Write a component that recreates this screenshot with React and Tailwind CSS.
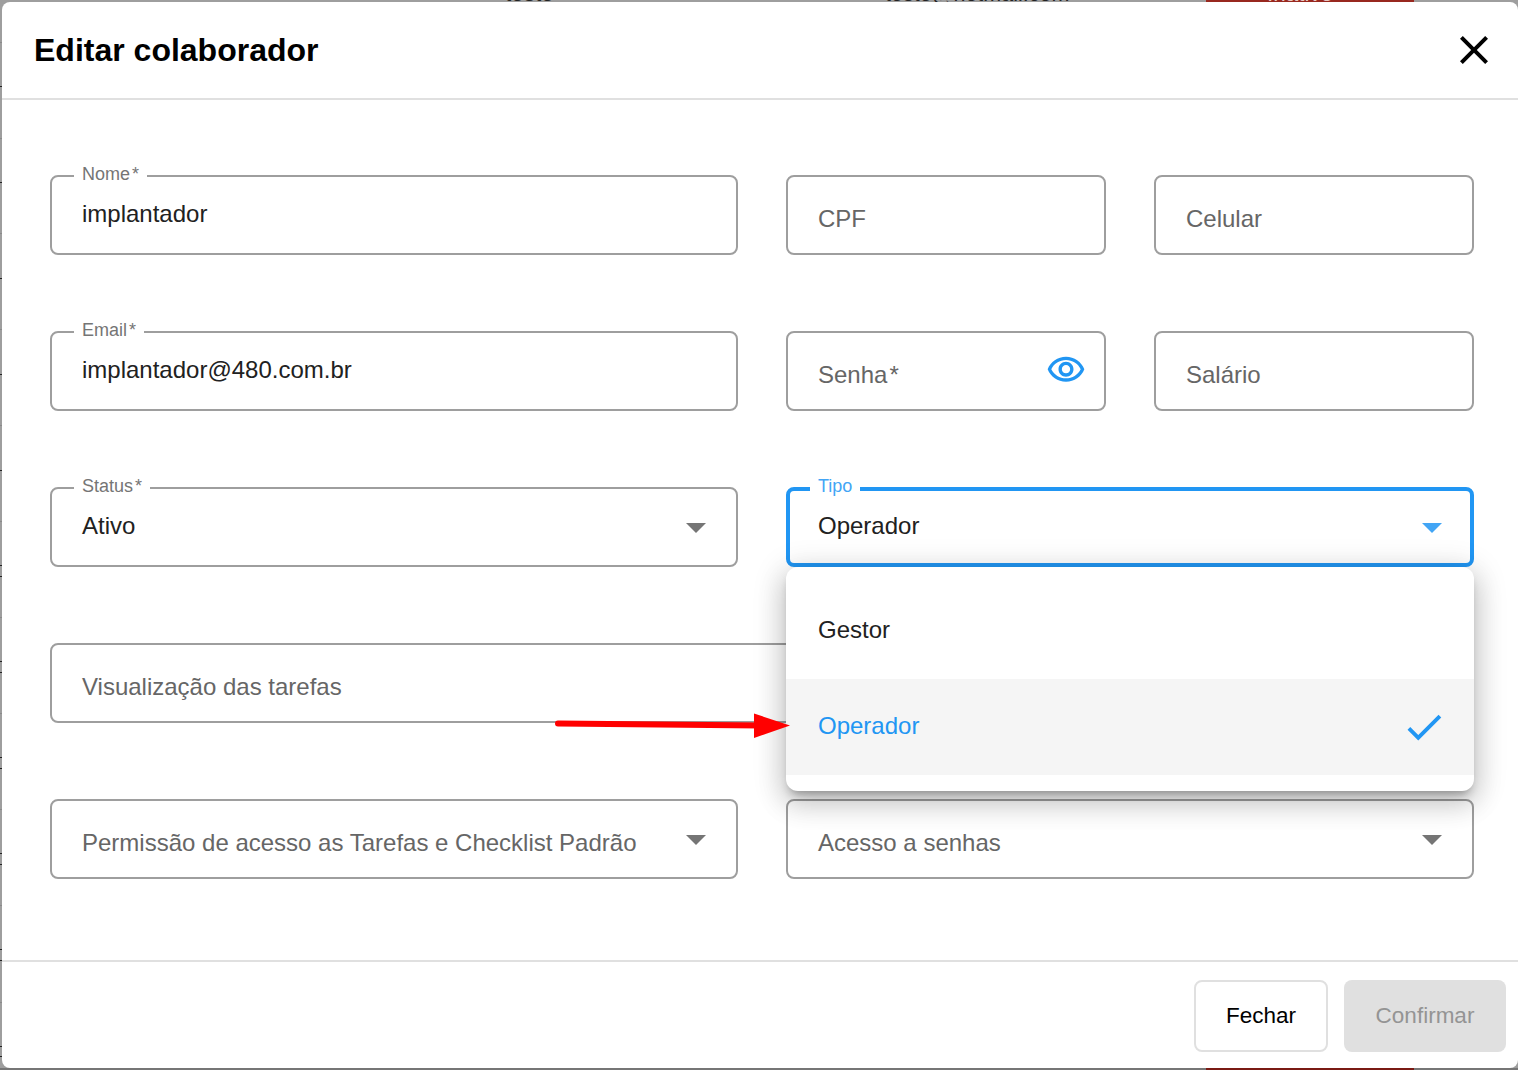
import { useState } from 'react'

const font = { fontFamily: '"Liberation Sans", Arial, sans-serif' }

// row lines of the table behind the modal, only their ends show on the left edge
const DARK_TICKS = [86, 182, 278, 374, 470, 565, 576, 661, 672, 757, 768, 853, 864, 949, 960, 1046, 1056]
const LIGHT_TICKS = [42, 138, 233, 329, 425, 521, 617, 713, 809, 905, 1002]

function ArrowDrop({ active, className = '' }) {
    return (
        <svg width="20" height="10" viewBox="0 0 20 10" className={`absolute ${active ? 'right-[28px]' : 'right-[30px]'} ${className}`}>
            <polygon points="0,0 20,0 10,10" fill={active ? '#42a5f5' : '#757575'} />
        </svg>
    )
}

function Required({ text }) {
    return (
        <>
            {text}
            <span className="ml-[2px]">*</span>
        </>
    )
}

function Field({ label, value, placeholder, active, children }) {
    return (
        <div className={`relative h-[80px] rounded-lg border-solid ${active ? 'border-[4px] border-[#2196f3]' : 'border-2 border-[#9e9e9e]'}`}>
            {label && (
                <span className={`absolute bg-white px-2 text-[18px] leading-[36px] ${active ? 'left-[20px] top-[-23px] text-[#42a5f5]' : 'left-[22px] top-[-21px] text-[#757575]'}`}>
                    {label}
                </span>
            )}
            {value && <span className={`absolute text-[24px] leading-[32px] text-[#212121] ${active ? 'left-[28px] top-[19px]' : 'left-[30px] top-[21px]'}`}>{value}</span>}
            {placeholder && <span className="absolute left-[30px] top-[26px] text-[24px] leading-[32px] text-[#666666]">{placeholder}</span>}
            {children}
        </div>
    )
}

export default function App() {
    const [tipo] = useState('Operador')

    return (
        <div style={font} className="relative h-[1070px] w-[1518px] overflow-hidden bg-[#9e9e9e]">
            {/* what shows of the page behind the modal */}
            <div className="absolute bottom-0 left-0 h-[2px] w-full bg-[#767676]" />
            <div className="absolute right-[104px] top-0 h-[2px] w-[208px] bg-[#98281f]" />
            <div className="absolute bottom-0 right-[104px] h-[2px] w-[208px] bg-[#7a1a14]" />
            {DARK_TICKS.map((y) => (
                <div key={y} className="absolute left-0 h-px w-[2px] bg-[#222222]" style={{ top: y }} />
            ))}
            {LIGHT_TICKS.map((y) => (
                <div key={y} className="absolute left-0 h-px w-[2px] bg-[#8a8a8a]" style={{ top: y }} />
            ))}

            <div className="absolute left-0 right-0 top-[-24px] h-[26px] overflow-hidden text-[22.5px] leading-[26px] text-[#222222]">
                <span className="absolute left-[505px] top-[5px]">teste</span>
                <span className="absolute left-[885px] top-[5px] text-[21.5px]">teste@hotmail.com</span>
                <span className="absolute left-[1267px] top-[5px] text-[#e8c8c4]">Inativo</span>
            </div>

            <div className="relative ml-[2px] mt-[2px] flex h-[1066px] flex-col rounded-lg bg-white">
                <header className="flex h-[98px] items-center justify-between border-b-2 border-[#e0e0e0] pl-[32px] pr-[20px]">
                    <h2 className="text-[32px] font-bold leading-[48px] text-black">Editar colaborador</h2>
                    <svg width="48" height="48" viewBox="0 0 24 24" fill="#000000">
                        <path d="M19 6.41L17.59 5 12 10.59 6.41 5 5 6.41 10.59 12 5 17.59 6.41 19 12 13.41 17.59 19 19 17.59 13.41 12z" />
                    </svg>
                </header>

                <div className="grid flex-1 grid-cols-[688px_688px] content-start gap-x-[48px] gap-y-[76px] pl-[48px] pt-[75px]">
                    <Field label={<Required text="Nome" />} value="implantador" />
                    <div className="grid grid-cols-2 gap-x-[48px]">
                        <Field placeholder="CPF" />
                        <Field placeholder="Celular" />
                    </div>

                    <Field label={<Required text="Email" />} value="implantador@480.com.br" />
                    <div className="grid grid-cols-2 gap-x-[48px]">
                        <Field placeholder={<Required text="Senha" />}>
                            <svg width="40" height="40" viewBox="0 0 24 24" fill="#2196f3" className="absolute left-[258px] top-[17px]">
                                <path d="M12 6c3.79 0 7.17 2.13 8.82 5.5C19.17 14.87 15.79 17 12 17s-7.17-2.13-8.82-5.5C4.83 8.13 8.21 6 12 6m0-2C7 4 2.73 7.11 1 11.5 2.73 15.89 7 19 12 19s9.27-3.11 11-7.5C21.27 7.11 17 4 12 4zm0 5c1.38 0 2.5 1.12 2.5 2.5S13.38 14 12 14s-2.5-1.12-2.5-2.5S10.62 9 12 9m0-2c-2.48 0-4.5 2.02-4.5 4.5S9.52 16 12 16s4.5-2.02 4.5-4.5S14.48 7 12 7z" />
                            </svg>
                        </Field>
                        <Field placeholder="Salário" />
                    </div>

                    <Field label={<Required text="Status" />} value="Ativo">
                        <ArrowDrop className="top-[34px]" />
                    </Field>
                    <div className="relative z-10">
                        <Field label="Tipo" value={tipo} active>
                            <ArrowDrop active className="top-[32px]" />
                        </Field>
                        <div className="absolute left-0 top-full w-full rounded-xl bg-white py-4 text-[24px] leading-[32px] shadow-[0_7px_8px_-4px_rgba(0,0,0,0.3),0_12px_28px_2px_rgba(0,0,0,0.14),0_5px_30px_6px_rgba(0,0,0,0.12)]">
                            <div className="flex h-[96px] items-center px-[32px] pb-[2px] text-[#212121]">Gestor</div>
                            <div className="flex h-[96px] items-center justify-between bg-[#f5f5f5] pl-[32px] pr-[27px] text-[#2196f3]">
                                <span className="mb-[2px]">Operador</span>
                                <svg width="46" height="46" viewBox="0 0 24 24" fill="#2196f3">
                                    <path d="M9 16.17L4.83 12l-1.42 1.41L9 19 21 7l-1.41-1.41z" />
                                </svg>
                            </div>
                        </div>
                    </div>

                    <div className="col-span-2">
                        <Field placeholder="Visualização das tarefas" />
                    </div>

                    <Field placeholder="Permissão de acesso as Tarefas e Checklist Padrão">
                        <ArrowDrop className="top-[34px]" />
                    </Field>
                    <Field placeholder="Acesso a senhas">
                        <ArrowDrop className="top-[34px]" />
                    </Field>
                </div>

                <footer className="flex h-[108px] justify-end gap-4 border-t-2 border-[#e0e0e0] pr-[12px] pt-[18px]">
                    <button className="h-[72px] w-[134px] rounded-lg border-2 border-[#e0e0e0] bg-white text-[22.5px] text-black">Fechar</button>
                    <button className="h-[72px] w-[162px] rounded-lg bg-[#e0e0e0] text-[22.5px] text-[#949494]">Confirmar</button>
                </footer>
            </div>

            {/* annotation drawn over the screenshot */}
            <svg width="1518" height="1070" className="pointer-events-none absolute left-0 top-0 z-20">
                <line x1="558" y1="723.5" x2="760" y2="725.5" stroke="#ff0000" strokeWidth="6" strokeLinecap="round" />
                <polygon points="754,713.5 790,725.5 754,738" fill="#ff0000" />
            </svg>
        </div>
    )
}
